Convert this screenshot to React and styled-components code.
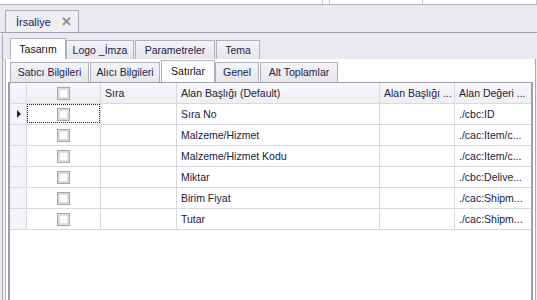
import React from "react";
import styled, { createGlobalStyle } from "styled-components";

const GlobalStyle = createGlobalStyle`
  html, body {
    margin: 0;
    padding: 0;
    background: #e9e9ee;
  }
  * {
    box-sizing: border-box;
  }
`;

const Screen = styled.div`
  width: 537px;
  height: 300px;
  overflow: hidden;
  background: #e9e9ee;
  font-family: "Liberation Sans", Arial, sans-serif;
  font-size: 10.5px;
  color: #20203c;
  display: flex;
  flex-direction: column;
`;

const TopStrip = styled.div`
  height: 5px;
  background: #ffffff;
  border-bottom: 1px solid #b4b4c0;
  display: grid;
  grid-template-columns: 323px 7px 93px 1fr;
  div {
    border-right: 1px solid #c8c8d0;
  }
`;

const DocTabs = styled.div`
  display: flex;
  align-items: flex-end;
  padding-left: 5px;
  height: 27px;
`;

const DocTab = styled.div`
  width: 74px;
  height: 22px;
  border: 1px solid #a8a8b6;
  border-bottom: none;
  background: #efeff3;
  display: flex;
  align-items: center;
  justify-content: space-between;
  padding: 0 6px 0 10px;
  font-size: 11px;
  color: #20205a;
  span {
    color: #8c8c96;
    font-weight: bold;
    font-size: 13px;
  }
`;

const DocPage = styled.div`
  flex: 1;
  border-top: 1px solid #a0a0ae;
  box-shadow: inset 0 1px 0 #ffffff;
  display: flex;
  flex-direction: column;
  padding-left: 2px;
  padding-right: 1px;
`;

const OuterFrame = styled.div`
  flex: 1;
  border-left: 1px solid #a8a8b6;
  padding-left: 2px;
  display: flex;
  flex-direction: column;
`;

const TabRow = styled.div`
  display: flex;
  align-items: flex-end;
  height: ${(p) => p.$h}px;
  padding-left: ${(p) => p.$pad}px;
  background: ${(p) => p.$bg};
`;

const Tab = styled.div`
  height: ${(p) => (p.$active ? p.$h + 2 : p.$h)}px;
  width: ${(p) => p.$w}px;
  margin-right: ${(p) => (p.$active ? 0 : 1)}px;
  border: 1px solid #b0b0bc;
  border-bottom: none;
  background: ${(p) =>
    p.$active ? "#ffffff" : "linear-gradient(#f4f4f7, #e6e6eb)"};
  display: flex;
  align-items: center;
  justify-content: center;
  font-size: 10.5px;
  color: ${(p) => (p.$active ? "#101018" : "#20204a")};
  padding-bottom: 1px;
  white-space: nowrap;
`;

const InnerPage = styled.div`
  flex: 1;
  background: #ffffff;
  border-left: 1px solid #b8b8c4;
  border-right: 1px solid #a8a8b6;
  display: flex;
  flex-direction: column;
`;

const Grid = styled.div`
  flex: 1;
  margin: 0 2px 0 2px;
  border-top: 1px solid #a0a0ae;
  border-left: 2px solid #9c9cab;
  border-right: 2px solid #9c9cab;
  display: grid;
  grid-template-columns: 17px 74px 76px 203px 75px 76px;
  grid-auto-rows: 21px;
  align-content: start;
`;

const Cell = styled.div`
  border-right: 1px solid #d8d8e0;
  border-bottom: 1px solid #d8d8e0;
  background: ${(p) => (p.$head ? "linear-gradient(#f7f7f9, #efeff2)" : p.$ind ? "#f3f4f7" : "#ffffff")};
  display: flex;
  align-items: center;
  justify-content: ${(p) => (p.$center ? "center" : "flex-start")};
  padding-left: ${(p) => (p.$center ? 0 : 4)}px;
  white-space: nowrap;
  overflow: hidden;
  position: relative;
  &:nth-child(6n) {
    border-right: none;
  }
`;

const Focus = styled.div`
  position: absolute;
  inset: 0 0 1px 0;
  border: 1px dotted #202020;
`;

const Box = styled.div`
  width: 13px;
  height: 13px;
  border: 1px solid #a4a4b0;
  box-shadow: inset 0 0 0 2px #dcdce4;
  background: #ffffff;
`;

const Arrow = styled.div`
  width: 0;
  height: 0;
  border-top: 4px solid transparent;
  border-bottom: 4px solid transparent;
  border-left: 4px solid #202030;
  margin-left: 1px;
`;

const headers = ["", "box", "Sıra", "Alan Başlığı (Default)", "Alan Başlığı ...", "Alan Değeri ..."];

const rows = [
  ["Sıra No", "./cbc:ID"],
  ["Malzeme/Hizmet", "./cac:Item/c..."],
  ["Malzeme/Hizmet Kodu", "./cac:Item/c..."],
  ["Miktar", "./cbc:Delive..."],
  ["Birim Fiyat", "./cac:Shipm..."],
  ["Tutar", "./cac:Shipm..."],
];

const topTabs = [
  { label: "Tasarım", w: 56, active: true },
  { label: "Logo _İmza", w: 68 },
  { label: "Parametreler", w: 80 },
  { label: "Tema", w: 44 },
];

const subTabs = [
  { label: "Satıcı Bilgileri", w: 79 },
  { label: "Alıcı Bilgileri", w: 70 },
  { label: "Satırlar", w: 54, active: true },
  { label: "Genel", w: 44 },
  { label: "Alt Toplamlar", w: 78 },
];

export default function App() {
  return (
    <Screen>
      <GlobalStyle />
      <TopStrip>
        <div />
        <div />
        <div />
        <div />
      </TopStrip>
      <DocTabs>
        <DocTab>
          İrsaliye <span>✕</span>
        </DocTab>
      </DocTabs>
      <DocPage>
        <OuterFrame>
          <TabRow $h={26} $pad={5} $bg="#e9e9ee">
            {topTabs.map((t) => (
              <Tab key={t.label} $w={t.w} $h={19} $active={t.active}>
                {t.label}
              </Tab>
            ))}
          </TabRow>
          <InnerPage>
            <TabRow $h={23} $pad={4} $bg="#ffffff">
              {subTabs.map((t) => (
                <Tab key={t.label} $w={t.w} $h={20} $active={t.active}>
                  {t.label}
                </Tab>
              ))}
            </TabRow>
            <Grid>
              {headers.map((h, i) => (
                <Cell key={i} $head $center={i < 2}>
                  {h === "box" ? <Box /> : h}
                </Cell>
              ))}
              {rows.map((r, i) => (
                <React.Fragment key={i}>
                  <Cell $ind $center>
                    {i === 0 && <Arrow />}
                  </Cell>
                  <Cell $center>
                    <Box />
                    {i === 0 && <Focus />}
                  </Cell>
                  <Cell />
                  <Cell>{r[0]}</Cell>
                  <Cell />
                  <Cell>{r[1]}</Cell>
                </React.Fragment>
              ))}
            </Grid>
          </InnerPage>
        </OuterFrame>
      </DocPage>
    </Screen>
  );
}
